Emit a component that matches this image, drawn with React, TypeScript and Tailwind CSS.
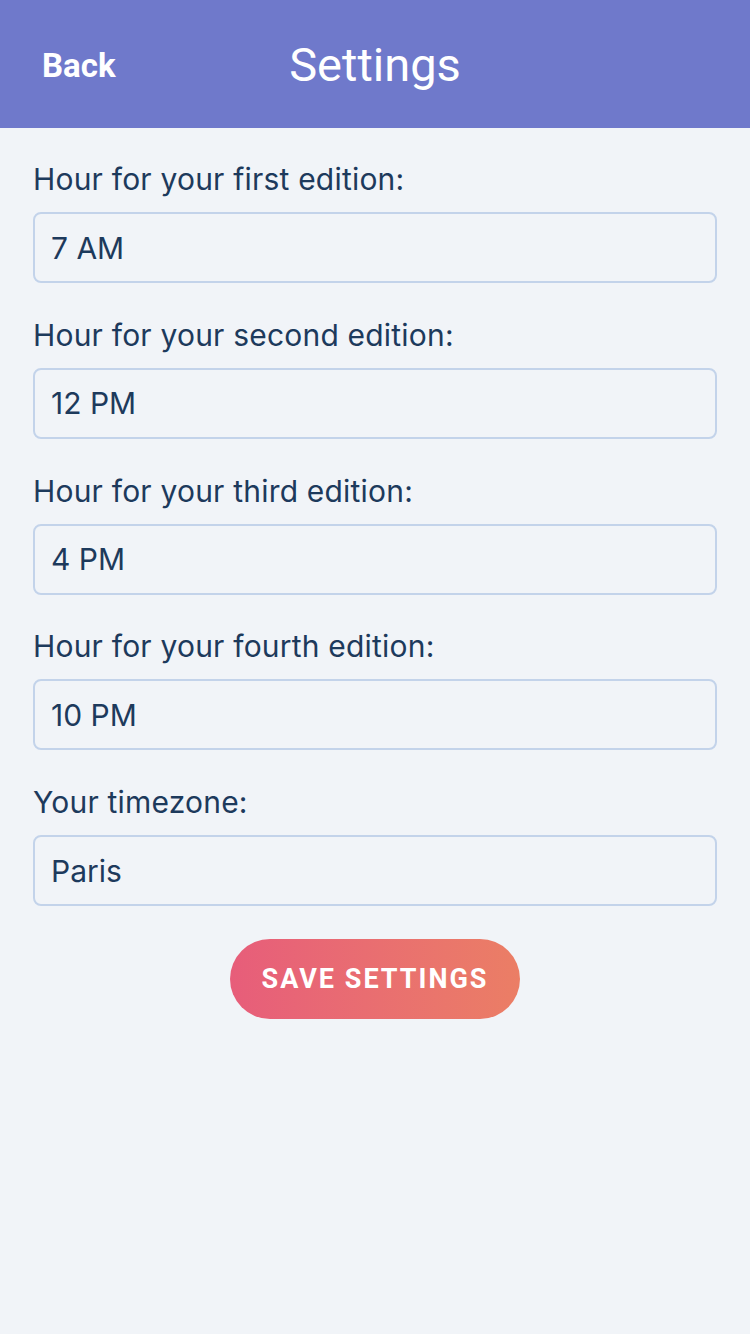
import { useState } from "react";

const fields = [
  { label: "Hour for your first edition:", value: "7 AM" },
  { label: "Hour for your second edition:", value: "12 PM" },
  { label: "Hour for your third edition:", value: "4 PM" },
  { label: "Hour for your fourth edition:", value: "10 PM" },
  { label: "Your timezone:", value: "Paris" },
];

const App = () => {
  const [values, setValues] = useState(fields.map((f) => f.value));

  return (
    <div className="min-h-[1334px] w-full bg-[#f1f4f8] font-['Inter',sans-serif]">
      {/* header */}
      <div className="relative flex h-[128px] items-center justify-center bg-[#6f79cb]">
        <button className="absolute left-[42px] top-[47px] font-['Roboto',sans-serif] text-[33px] font-bold leading-[38px] text-white">
          Back
        </button>
        <h1 className="mt-[2px] font-['Roboto',sans-serif] text-[47px] font-normal leading-[56px] text-white">
          Settings
        </h1>
      </div>

      {/* form */}
      <div className="flex flex-col px-[33px] pt-[33px]">
        {fields.map((f, i) => (
          <div key={f.label} className="mb-[33.75px] flex flex-col gap-[15px]">
            <label className="block h-[36px] text-[30px] leading-[36px] tracking-[0.2px] text-[#1d3a5c]">{f.label}</label>
            <input
              value={values[i]}
              onChange={(e) => {
                const next = [...values];
                next[i] = e.target.value;
                setValues(next);
              }}
              className="h-[71px] w-full rounded-[8px] border-2 border-[#c3d3ea] bg-[#f1f4f8] px-[16px] text-[30px] text-[#1d3a5c] outline-none"
            />
          </div>
        ))}
        <div className="-mt-[1px] flex justify-center">
          <button className="h-[80px] w-[290px] rounded-full bg-gradient-to-r from-[#e75d7a] to-[#eb7e65] font-['Roboto',sans-serif] text-[27px] font-bold tracking-[2px] text-white">
            SAVE SETTINGS
          </button>
        </div>
      </div>
    </div>
  );
};

export default App;
